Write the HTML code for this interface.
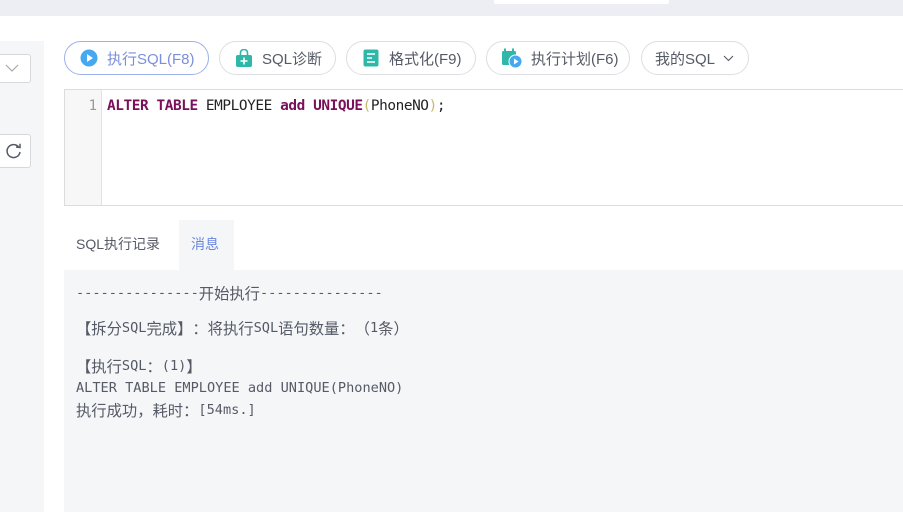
<!DOCTYPE html>
<html><head><meta charset="utf-8"><style>
*{margin:0;padding:0;box-sizing:border-box}
body{width:903px;height:512px;overflow:hidden;background:#fff;position:relative;font-family:"Liberation Sans","Noto Sans CJK SC",sans-serif;}
.abs{position:absolute}
.btn{position:absolute;top:41px;height:34px;border:1px solid #dcdee2;border-radius:17px;background:#fff;font-size:15px;color:#555a66;display:flex;align-items:center;padding-left:15px;white-space:nowrap}
.btn svg{margin-right:9px}
.mono{font-family:"DejaVu Sans Mono","Noto Sans CJK SC",monospace;}
.msg{position:absolute;left:76px;font-size:13.6px;line-height:18px;height:18px;color:#555a66;white-space:pre}
.c{font-family:"WenQuanYi Zen Hei","Noto Sans CJK SC",sans-serif;font-size:15.3px;line-height:18px;vertical-align:top}
.p{display:inline-block;width:15.3px;text-align:center}
</style></head><body>
<div class="abs" style="left:0;top:0;width:903px;height:16px;background:#eceef3"></div>
<div class="abs" style="left:494px;top:0;width:175px;height:4px;background:#fff;border-radius:0 0 2px 2px"></div>
<div class="abs" style="left:0;top:41px;width:44px;height:471px;background:#f5f6f8"></div>
<div class="abs" style="left:-4px;top:54px;width:35px;height:29px;background:#fff;border:1px solid #d6d8dc;border-radius:3px"></div>
<svg class="abs" style="left:5px;top:63px" width="14" height="10"><path d="M1 2 L7 8 L13 2" fill="none" stroke="#aaa" stroke-width="1.2"/></svg>
<div class="abs" style="left:-4px;top:134px;width:35px;height:34px;background:#fff;border:1px solid #d6d8dc;border-radius:3px"></div>
<svg class="abs" style="left:5px;top:142px" width="18" height="18"><path d="M14 5.5 A6.5 6.5 0 1 0 15 10" fill="none" stroke="#555a66" stroke-width="1.5"/><path d="M11 5 L15 5.5 L15 1.8" fill="none" stroke="#555a66" stroke-width="1.5"/></svg>

<div class="btn" style="left:64px;width:145px;border-color:#9bb0ec;color:#7c8fdc">
<svg width="18" height="18"><circle cx="9" cy="9" r="8.5" fill="#45a8f0"/><path d="M7 5 L13 9 L7 13Z" fill="#fff"/></svg>执行SQL(F8)</div>
<div class="btn" style="left:219px;width:117px">
<svg width="18" height="18"><path d="M5.5 6 V3.5 A3.5 3 0 0 1 12.5 3.5 V6" fill="none" stroke="#2fb8a8" stroke-width="1.6"/><rect x="1" y="6" width="16" height="12" rx="2" fill="#2fb8a8"/><path d="M9 8.5 V15.5 M5.5 12 H12.5" stroke="#fff" stroke-width="1.6"/></svg>SQL诊断</div>
<div class="btn" style="left:346px;width:130px">
<svg width="18" height="18"><rect x="1.5" y="0.5" width="15" height="17" rx="2" fill="#2fb8a8"/><path d="M5 5 H13 M5 9 H10 M5 13 H13" stroke="#fff" stroke-width="1.6"/></svg>格式化(F9)</div>
<div class="btn" style="left:486px;width:144px">
<svg width="20" height="20"><rect x="0" y="3" width="14" height="14" rx="1.5" fill="#2fb8a8"/><rect x="2" y="0.5" width="2" height="4" fill="#2fb8a8"/><rect x="10" y="0.5" width="2" height="4" fill="#2fb8a8"/><circle cx="13.5" cy="13.5" r="6.5" fill="#45a8f0" stroke="#fff" stroke-width="1"/><path d="M12 10.5 L16.5 13.5 L12 16.5Z" fill="#fff"/></svg>执行计划(F6)</div>
<div class="btn" style="left:641px;width:108px;padding-left:13px">我的SQL<svg style="margin-left:8px;margin-right:0" width="11" height="7"><path d="M1 1 L5.5 5.5 L10 1" fill="none" stroke="#555a66" stroke-width="1.1"/></svg></div>

<div class="abs" style="left:64px;top:89px;width:839px;height:117px;border:1px solid #dcdcdc;border-right:none;background:#fff"></div>
<div class="abs" style="left:65px;top:90px;width:37px;height:115px;background:#f7f7f7;border-right:1px solid #e2e2e2"></div>
<div class="abs mono" style="left:65px;top:98px;width:32px;text-align:right;font-size:14px;color:#999">1</div>
<div class="abs mono" style="left:107px;top:98px;font-size:14.4px;letter-spacing:-0.42px;color:#222;white-space:pre"><b style="color:#7a0f5a">ALTER TABLE</b> EMPLOYEE <b style="color:#7a0f5a">add UNIQUE</b><span style="color:#c8b96a">(</span>PhoneNO<span style="color:#c8b96a">)</span>;</div>

<div class="abs" style="left:76px;top:234px;font-size:14px;color:#555a66">SQL执行记录</div>
<div class="abs" style="left:179px;top:220px;width:55px;height:50px;background:#f5f6f8"></div>
<div class="abs" style="left:191px;top:234px;font-size:14px;color:#6b86e0">消息</div>
<div class="abs" style="left:64px;top:270px;width:839px;height:242px;background:#f5f6f8"></div>
<div class="msg mono" style="top:284px">---------------<span class="c">开始执行</span>---------------</div>
<div class="msg mono" style="top:319px"><span class="c">【拆分</span>SQL<span class="c">完成】<span class="p">：</span>将执行</span>SQL<span class="c">语句数量<span class="p">：</span><span class="p">（</span></span>1<span class="c">条<span class="p">）</span></span></div>
<div class="msg mono" style="top:357px"><span class="c">【执行</span>SQL<span class="c"><span class="p">：</span></span>(1)<span class="c">】</span></div>
<div class="msg mono" style="top:379px">ALTER TABLE EMPLOYEE add UNIQUE(PhoneNO)</div>
<div class="msg mono" style="top:401px"><span class="c">执行成功<span class="p">，</span>耗时<span class="p">：</span></span>[54ms.]</div>
</body></html>
